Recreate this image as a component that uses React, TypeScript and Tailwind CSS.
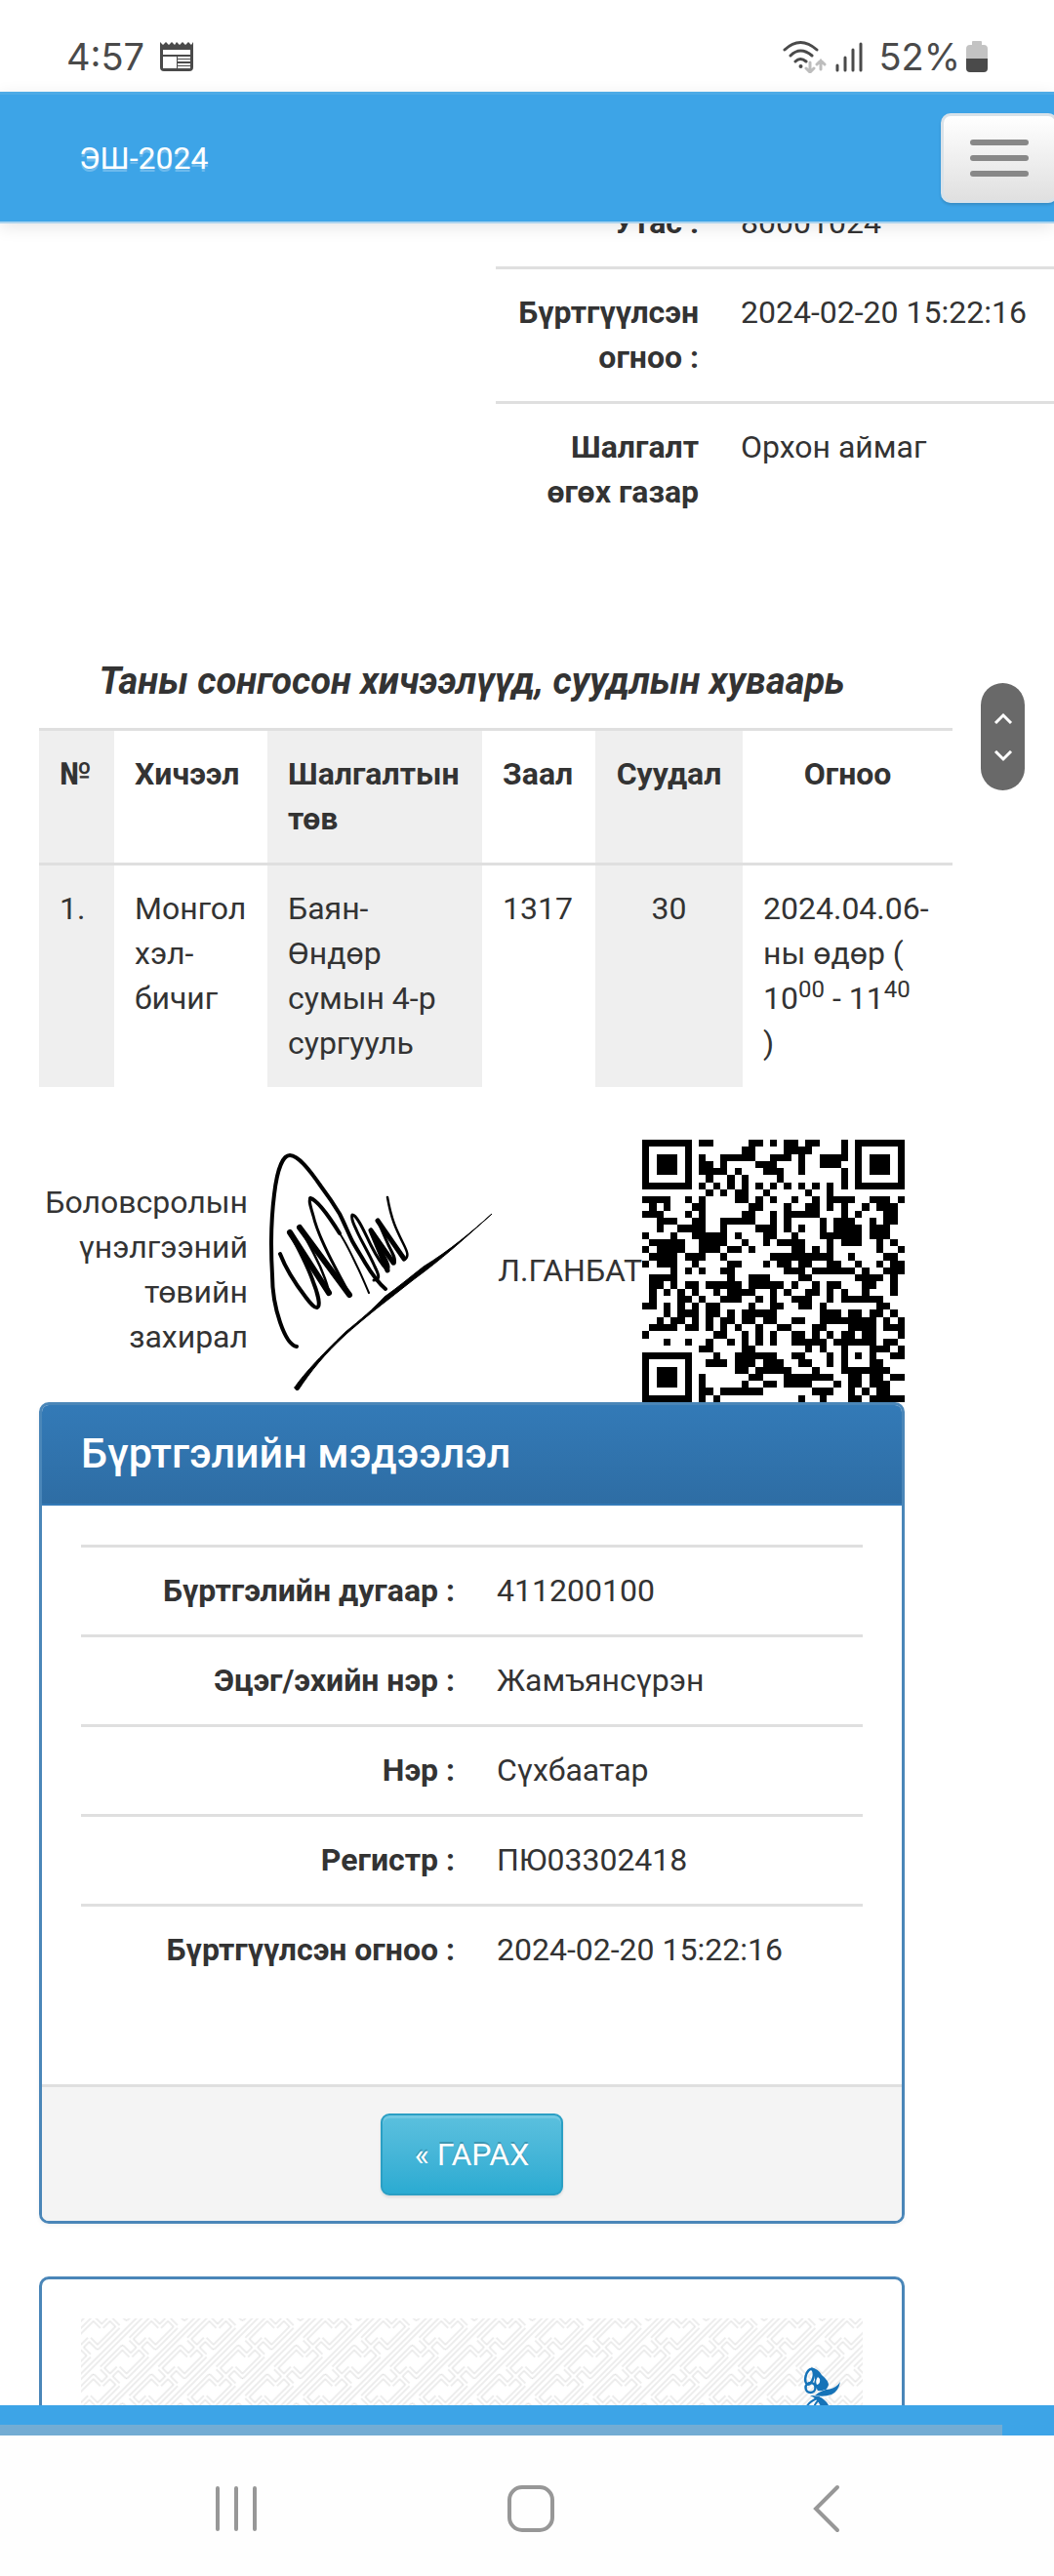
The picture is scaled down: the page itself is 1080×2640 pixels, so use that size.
import React from 'react';

const qrRows = [
  '0-6 8-9 15-16 18 20-21 23-24 28 30-36',
  '0 6 14-15 20-23 28 30 36',
  '0 2-4 6 8 11-15 18-20 22 25-28 30 32-34 36',
  '0 2-4 6 8-9 11 16-18 22 25-27 30 32-34 36',
  '0 2-4 6 8-11 13 17-19 22 28 30 32-34 36',
  '0 6 9 12 14 19 28 30 36',
  '0-6 8 10 12 14 16 18 20 22 24 26 28 30-36',
  '9 11 13-14 17 23 26',
  '0-3 6 8 13-14 16 18 21 24 26-29 32-34 36',
  '1 3 7-8 15-16 20 23-24 26 28 31 33-35',
  '0-2 6 8 14-15 18 20-24 28 30 34-35',
  '2-4 7-8 11-15 18 20 25 27-29 32 34-35',
  '2 5-8 11 16-18 20 22 25 27-30 32-34',
  '0 4 7-11 13 17-18 21 25-30 32-34',
  '1-5 8-11 14 17 19-22 26 28-30 33 35',
  '0 2-5 8-10 12-13 15 21-22 24 26 33 36',
  '1-4 6-8 11 18-26 29 34-35',
  '0 2-4 7 12-13 17 19-20 22-23 26-27 30 33 35-36',
  '4 6 8 11-12 20-22 24-29 31 34-36',
  '1-4 12 15-17 22-23 30-33 35',
  '1-2 4 6-7 9-13 15-19 21 24 26-27 31-32 35',
  '1 3 5 7 10 12-15 18 20 23-24 26 28 31 35',
  '1 5-6 8 11-13 16 18 21-23 26 28-33',
  '0-1 3 5 7 9-10 15 18-19 22-23 25 33-34',
  '3 5-7 9-10 12 14-18 25-27 29-30 32-33 35',
  '2 4-5 7 9 11-12 14-15 17-18 21-22 25-32 34 36',
  '1-4 6-7 9 11 13 16 19-20 24-25 29-32 34-36',
  '0 10-11 14 16 18 21-22 24 26 28-29 31-32 36',
  '3 6 9 12 14 16 18 21-25 27-32 34-35',
  '8-9 14-15 23 25 28 32-34 36',
  '0-6 10 13-18 21-22 26 28 30 32 35-36',
  '0 6 9-11 13-15 17-19 22-23 26 28 32-33',
  '0 2-4 6 13-14 16-20 24 28-34',
  '0 2-4 6 8 15-16 20-26 29-30 32-33 35-36',
  '0 2-4 6 8 14 17-18 20-23 27 29-30 32-34',
  '0 6 8-9 11-16 24-26 29 31 33-34',
  '0-6 8 10 22 25 29-30 32-36',
];

const qrPath = qrRows
  .map((row, y) =>
    row
      .split(' ')
      .map((run) => {
        const [a, b = a] = run.split('-').map(Number);
        return `M${a} ${y}h${b - a + 1}v1H${a}z`;
      })
      .join(''),
  )
  .join('');

function QrCode() {
  return (
    <svg viewBox="0 0 37 37" className="size-[269px] shrink-0" shapeRendering="crispEdges" role="img" aria-label="QR">
      <path d={qrPath} fill="#000" />
    </svg>
  );
}

function Signature() {
  return (
    <svg viewBox="0 0 240 250" className="h-[250px] w-[240px] shrink-0" fill="none" stroke="#000" strokeLinecap="round" strokeLinejoin="round" aria-hidden="true">
      <path d="M34 202C22 200 9 162 9 129C7 96 8 70 11 46C14 20 20 6 27 6C36 6 48 22 59 38C68 50 72 56 78 66C83 76 87 86 91 94C96 103 100 109 104 116C110 126 118 137 125 143" strokeWidth="4" />
      <path d="M17 107C22 120 33 138 43 151C48 158 53 163 55 162C59 160 55 146 51 136C45 118 34 98 27 85" strokeWidth="4" />
      <path d="M67 147C66 138 62 130 58 120C52 107 44 92 37 80" strokeWidth="2.500" />
      <path d="M27 85L67 147M37 80L88 149" strokeWidth="6" />
      <path d="M88 149C84 140 78 130 74 122C65 105 55 85 51 68C48 58 46 52 48 50" strokeWidth="3" />
      <path d="M48 50C56 52 68 70 78 86" strokeWidth="4" />
      <path d="M78 86C86 98 92 112 96 120C101 130 104 138 108 147" strokeWidth="2" />
      <path d="M113 134C121 134 117 126 114 120C108 106 99 92 95 82C91 74 90 69 91 67C96 67 104 86 110 98C116 110 121 118 127 124C130 120 126 114 122 106L110 82L134 117C136 112 132 106 128 98L117 73" strokeWidth="3" />
      <path d="M110 83L127 124M110 83L133 116M117 73L144 112" strokeWidth="5" />
      <path d="M144 113C150 110 147 104 143 96C136 82 131 72 127 49" strokeWidth="2.500" />
      <path d="M32 244C38 234 58 212 84 187C100 174 112 164 124 151C138 141 150 131 164 120C190 104 214 84 234 66C214 84 190 106 165 125C150 136 138 146 125 156C112 166 100 176 85 189C62 210 48 228 36 246Q33 248 32 244Z" fill="#000" strokeWidth="1" />
    </svg>
  );
}

function StatusBar() {
  return (
    <div className="flex h-[94px] shrink-0 items-center justify-between bg-white pl-[68px] pr-[68px] pt-[22px] text-[#4a4a4a]">
      <div className="flex items-center gap-4">
        <span className="font-[Inter] text-[38px] leading-[46px]">4:57</span>
        <svg viewBox="0 0 34 30" className="h-[30px] w-[34px]" aria-hidden="true">
          <path fill="#4a4a4a" d="M0 0l3 3 3-3 3 3 3-3 3 3 2-3 3 3 3-3 3 3 3-3 3 3 2-3v26q0 4-4 4H4q-4 0-4-4z" />
          <path fill="#fff" d="M3 8h28v5H3zM3 15h14v12H3zM18 15h13v2H18zM18 18h13v2H18zM18 22h13v2H18zM18 25h13v2H18z" />
        </svg>
      </div>
      <div className="flex items-center">
        <svg viewBox="0 0 82 34" className="mr-4 h-[34px] w-[82px]" fill="none" strokeLinecap="round" aria-hidden="true">
          <g stroke="#4a4a4a" strokeWidth="3">
            <path d="M2 10Q18-5 35 10M8 16Q18 6 30 16M13 22Q18 17 24 22" />
            <path d="M56 26v5M64 18v13M72 10v21M80 4v27" />
          </g>
          <circle cx="18.500" cy="27" r="2" fill="#4a4a4a" />
          <path d="M28 23v9M24 29l4 4 4-4M39 30v-9M35 25l4-4 4 4" stroke="#bdbdbd" strokeWidth="3" />
        </svg>
        <span className="font-[Inter] text-[38px] leading-[46px]">52%</span>
        <svg viewBox="0 0 22 32" className="ml-[6px] h-[32px] w-[22px]" aria-hidden="true">
          <path d="M6 1q0-1 1-1h8q1 0 1 1v3h2q4 0 4 4v11H0V8q0-4 4-4h2z" fill="#c3c3c3" />
          <path d="M0 18h22v10q0 4-4 4H4q-4 0-4-4z" fill="#4a4a4a" />
        </svg>
      </div>
    </div>
  );
}

function Navbar() {
  return (
    <header className="relative z-10 h-[135px] shrink-0 border-b-2 border-t-3 border-b-[#a9d3ef] border-t-[#4eabe6] bg-[#3da4e7] shadow-[0_4px_16px_rgba(0,0,0,0.1)]">
      <div className="flex h-full items-center justify-between overflow-hidden pl-[81px]">
        <a href="#home" className="text-[32px] leading-[46px] text-white [text-shadow:0_3px_0_rgba(255,255,255,0.25)]">
          ЭШ-2024
        </a>
        <button
          type="button"
          aria-label="Цэс"
          className="-mr-1 flex h-[92px] w-30 flex-col items-center justify-center gap-[10px] rounded-[10px] border-3 border-[#d9e2e9] bg-linear-to-b from-white to-[#e0e0e0] shadow-[0_2px_3px_rgba(0,0,0,0.15)]"
        >
          <span className="h-[6px] w-15 rounded-full bg-[#888]" />
          <span className="h-[6px] w-15 rounded-full bg-[#888]" />
          <span className="h-[6px] w-15 rounded-full bg-[#888]" />
        </button>
      </div>
    </header>
  );
}

function ProfileTable() {
  const rows: [React.ReactNode, string][] = [
    ['Утас :', '80001024'],
    [<>Бүртгүүлсэн<br />огноо :</>, '2024-02-20 15:22:16'],
    [<>Шалгалт<br />өгөх газар</>, 'Орхон аймаг'],
  ];
  return (
    <table className="-mt-12 ml-[468px] w-[620px]">
      <tbody>
        {rows.map(([label, value]) => (
          <tr key={value} className="border-t-3 border-[#dfdfdf] align-top">
            <th scope="row" className="w-[230px] px-[22px] pb-[22px] pt-[21px] text-right font-bold">{label}</th>
            <td className="whitespace-nowrap px-[21px] pb-[22px] pt-[21px]">{value}</td>
          </tr>
        ))}
      </tbody>
    </table>
  );
}

function ScheduleTable() {
  const cell = 'px-[21px] pb-[22px] pt-[21px] text-left';
  const shaded = 'bg-[#efefef] px-[21px] pb-[22px] pt-[21px] text-left';
  return (
    <table className="w-[936px] table-fixed">
      <colgroup>
        <col className="w-[77px]" />
        <col className="w-[157px]" />
        <col className="w-[220px]" />
        <col className="w-[116px]" />
        <col className="w-[151px]" />
        <col className="w-[215px]" />
      </colgroup>
      <thead>
        <tr className="border-t-3 border-[#dfdfdf] align-top font-bold">
          <th scope="col" className={shaded}>№</th>
          <th scope="col" className={cell}>Хичээл</th>
          <th scope="col" className={shaded}>Шалгалтын төв</th>
          <th scope="col" className={cell}>Заал</th>
          <th scope="col" className="bg-[#efefef] px-[21px] pb-[22px] pt-[21px] text-center">Суудал</th>
          <th scope="col" className="px-[21px] pb-[22px] pt-[21px] text-center">Огноо</th>
        </tr>
      </thead>
      <tbody>
        <tr className="border-t-3 border-[#dfdfdf] align-top">
          <td className={shaded}>1.</td>
          <td className={cell}>Монгол хэл-бичиг</td>
          <td className={shaded}>Баян-Өндөр сумын 4-р сургууль</td>
          <td className={cell}>1317</td>
          <td className="bg-[#efefef] px-[21px] pb-[22px] pt-[21px] text-center">30</td>
          <td className={cell}>
            2024.04.06-<br />ны өдөр (<br />10<sup>00</sup> - 11<sup>40</sup><br />)
          </td>
        </tr>
      </tbody>
    </table>
  );
}

function RegistrationPanel() {
  const rows = [
    ['Бүртгэлийн дугаар :', '411200100'],
    ['Эцэг/эхийн нэр :', 'Жамъянсүрэн'],
    ['Нэр :', 'Сүхбаатар'],
    ['Регистр :', 'ПЮ03302418'],
    ['Бүртгүүлсэн огноо :', '2024-02-20 15:22:16'],
  ];
  return (
    <section className="overflow-hidden rounded-[10px] border-3 border-[#4a86b8] shadow-[0_2px_4px_rgba(0,0,0,0.05)]">
      <h3 className="border-b-2 border-[#337ab7] bg-linear-to-b from-[#337ab7] to-[#2e6da4] px-10 pb-[27px] pt-6 text-[43px] font-medium leading-[50px] text-white">
        Бүртгэлийн мэдээлэл
      </h3>
      <div className="px-10 pb-[93px] pt-10">
        <table className="w-full table-fixed">
          <tbody>
            {rows.map(([label, value]) => (
              <tr key={label} className="border-t-3 border-[#dfdfdf] align-top">
                <th scope="row" className="w-[405px] pb-[22px] pr-[22px] pt-[21px] text-right font-bold">{label}</th>
                <td className="pb-[22px] pl-[21px] pt-[21px]">{value}</td>
              </tr>
            ))}
          </tbody>
        </table>
      </div>
      <div className="flex justify-center border-t-3 border-[#dfdfdf] bg-[#f4f4f4] pb-[26px] pt-[27px]">
        <button
          type="button"
          className="h-21 rounded-[9px] border-2 border-[#2b9fc4] bg-linear-to-b from-[#5bc0de] to-[#2aabd2] px-[33px] text-[32px] leading-[46px] text-white shadow-[inset_0_3px_0_rgba(255,255,255,0.15),0_2px_3px_rgba(0,0,0,0.1)] [text-shadow:0_-2px_0_rgba(0,0,0,0.2)]"
        >
          « ГАРАХ
        </button>
      </div>
    </section>
  );
}

const latticePath =
  'M21 9V33M9 21H33M21 9H51V21M-21 9H9V21M21 33H-9V21M63 33H33V21M0 0H42M0 42H42';

function BannerPanel() {
  return (
    <section className="mt-[54px] rounded-[10px] border-3 border-[#4a86b8] px-10 pt-10">
      <div className="relative h-40">
        <svg className="size-full" aria-hidden="true">
          <defs>
            <pattern id="lattice" width="42" height="42" patternUnits="userSpaceOnUse" patternTransform="rotate(-45)">
              <path d={latticePath} fill="none" stroke="#dcdcdc" strokeWidth="5" strokeLinejoin="round" />
              <path d={latticePath} fill="none" stroke="#fff" strokeWidth="3" strokeLinejoin="round" />
            </pattern>
          </defs>
          <rect width="100%" height="100%" fill="url(#lattice)" />
        </svg>
        <svg viewBox="0 0 40 46" className="absolute right-[22px] top-[49px] h-[46px] w-10" fill="#1673b8" aria-hidden="true">
          <ellipse cx="7.500" cy="11" rx="4" ry="8" transform="rotate(15 8 11)" fill="none" stroke="#1673b8" strokeWidth="2.500" />
          <path fillRule="evenodd" d="M9 1Q17 3 20 9Q27 15 27 19Q25 25 23 24Q19 26 16 25L12 18Q15 10 9 1ZM16 11Q13 15 15 19Q19 18 18 13Z" />
          <ellipse cx="8.500" cy="22" rx="5" ry="5" fill="none" stroke="#1673b8" strokeWidth="2.500" />
          <path d="M13 30Q20 24 28 23.500Q35 22 39 16Q37 26 30 29Q22 32 13 30Z" />
          <path d="M8 30Q18 30 22 34Q26 37 29 44H20Q17 34 8 30Z" />
          <path d="M4 43Q6 36 18 32M12 43Q13 37 17 35" fill="none" stroke="#1673b8" strokeWidth="2" />
        </svg>
      </div>
    </section>
  );
}

export default function App() {
  return (
    <div className="flex h-screen flex-col overflow-hidden bg-white font-[Roboto,sans-serif] text-[32px] leading-[46px] text-[#333]">
      <StatusBar />
      <Navbar />
      <main className="relative min-h-0 flex-1 overflow-hidden pl-10 pr-[153px]">
        <ProfileTable />
        <h2 className="mb-[22px] mt-[123px] text-center text-[38px] font-bold italic leading-[52px]">
          Таны сонгосон хичээлүүд, суудлын хуваарь
        </h2>
        <ScheduleTable />
        <div className="mt-[54px] flex items-center">
          <p className="w-[214px] pb-1 text-right">
            Боловсролын үнэлгээний төвийн захирал
          </p>
          <div className="flex flex-1 items-center justify-end">
            <Signature />
            <span className="whitespace-nowrap pb-[2px]">Л.ГАНБАТ</span>
            <QrCode />
          </div>
        </div>
        <RegistrationPanel />
        <BannerPanel />
        <div className="absolute right-[30px] top-[471px] flex h-[110px] w-[45px] flex-col items-center justify-center rounded-full bg-[#696969]">
          <button type="button" aria-label="Дээш" className="flex h-[39px] items-center">
            <svg viewBox="0 0 20 12" className="h-3 w-5" fill="none" stroke="#fff" strokeWidth="3" aria-hidden="true"><path d="M2 11l8-8 8 8" /></svg>
          </button>
          <button type="button" aria-label="Доош" className="flex h-[39px] items-center">
            <svg viewBox="0 0 20 12" className="h-3 w-5" fill="none" stroke="#fff" strokeWidth="3" aria-hidden="true"><path d="M2 1l8 8 8-8" /></svg>
          </button>
        </div>
      </main>
      <div className="flex h-[31px] shrink-0 flex-col justify-end bg-[#3da4e7]">
        <div className="mr-[53px] h-[11px] bg-[#73acd3]" />
      </div>
      <nav className="flex h-36 shrink-0 items-center justify-between bg-[#fefefe] px-[218px] pt-[6px]">
        <button type="button" aria-label="Сүүлийн апп-ууд">
          <svg viewBox="0 0 48 50" className="h-[50px] w-12" stroke="#979797" strokeWidth="4" strokeLinecap="round" aria-hidden="true"><path d="M5 4v42M24 4v42M43 4v42" /></svg>
        </button>
        <button type="button" aria-label="Нүүр">
          <svg viewBox="0 0 50 50" className="size-[50px]" fill="none" stroke="#979797" strokeWidth="4" aria-hidden="true"><rect x="3" y="3" width="44" height="44" rx="13" /></svg>
        </button>
        <button type="button" aria-label="Буцах">
          <svg viewBox="-11 0 41 50" className="h-[50px] w-[41px]" fill="none" stroke="#979797" strokeWidth="4" strokeLinecap="round" aria-hidden="true"><path d="M26 3L4 25l22 22" /></svg>
        </button>
      </nav>
    </div>
  );
}
